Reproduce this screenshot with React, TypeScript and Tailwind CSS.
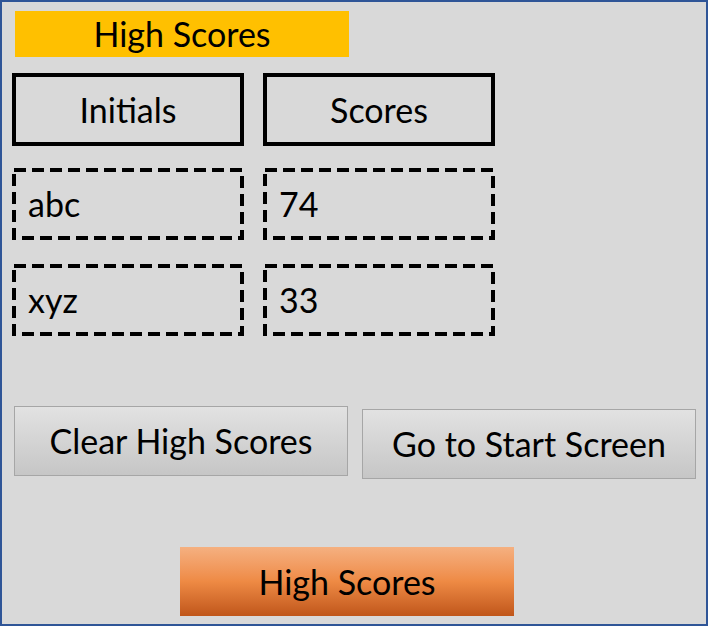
import React from 'react';

const font = { fontFamily: 'Lato, "Open Sans", sans-serif' };

const scores = [
  { initials: 'abc', score: '74' },
  { initials: 'xyz', score: '33' },
];

// dashed outline drawn in svg so the dash length matches the original
const DashedBox = ({ children }: { children: React.ReactNode }) => (
  <div className="relative w-[232px] h-[72px] flex items-center pl-[16px] text-[34px] leading-none">
    <svg className="absolute inset-0" width="232" height="72">
      <rect
        x="2"
        y="2"
        width="228"
        height="68"
        fill="none"
        stroke="black"
        strokeWidth="4"
        strokeDasharray="12 6"
      />
    </svg>
    <span className="relative">{children}</span>
  </div>
);

export default function App() {
  return (
    <div
      className="w-[708px] h-[626px] border-2 border-[#2f5597] bg-[#d9d9d9] text-black flex flex-col"
      style={font}
    >
      {/* Title */}
      <div className="ml-[13px] mt-[9px] w-[334px] h-[46px] bg-[#ffc000] flex items-center justify-center text-[34px] leading-none">
        High Scores
      </div>

      {/* Header boxes */}
      <div className="ml-[10px] mt-[16px] flex gap-[19px]">
        {['Initials', 'Scores'].map((h) => (
          <div
            key={h}
            className="w-[232px] h-[73px] border-4 border-black flex items-center justify-center text-[34px] leading-none"
          >
            {h}
          </div>
        ))}
      </div>

      {/* Score rows */}
      <div className="ml-[10px] mt-[22px] flex flex-col gap-[24px]">
        {scores.map((s) => (
          <div key={s.initials} className="flex gap-[19px]">
            <DashedBox>{s.initials}</DashedBox>
            <DashedBox>{s.score}</DashedBox>
          </div>
        ))}
      </div>

      {/* Action buttons */}
      <div className="ml-[12px] mt-[70px] flex items-start gap-[14px]">
        <button className="w-[334px] h-[70px] border border-[#a6a6a6] bg-gradient-to-b from-[#e2e2e2] to-[#c6c6c6] text-[34px] leading-none">
          Clear High Scores
        </button>
        <button className="mt-[3px] w-[334px] h-[70px] border border-[#a6a6a6] bg-gradient-to-b from-[#e2e2e2] to-[#c6c6c6] text-[34px] leading-none">
          Go to Start Screen
        </button>
      </div>

      {/* Bottom nav */}
      <div className="mt-[68px] ml-[178px]">
        <button className="w-[334px] h-[69px] bg-gradient-to-b from-[#f5b080] via-[#ee8a44] to-[#c0561a] text-[34px] leading-none">
          High Scores
        </button>
      </div>
    </div>
  );
}
